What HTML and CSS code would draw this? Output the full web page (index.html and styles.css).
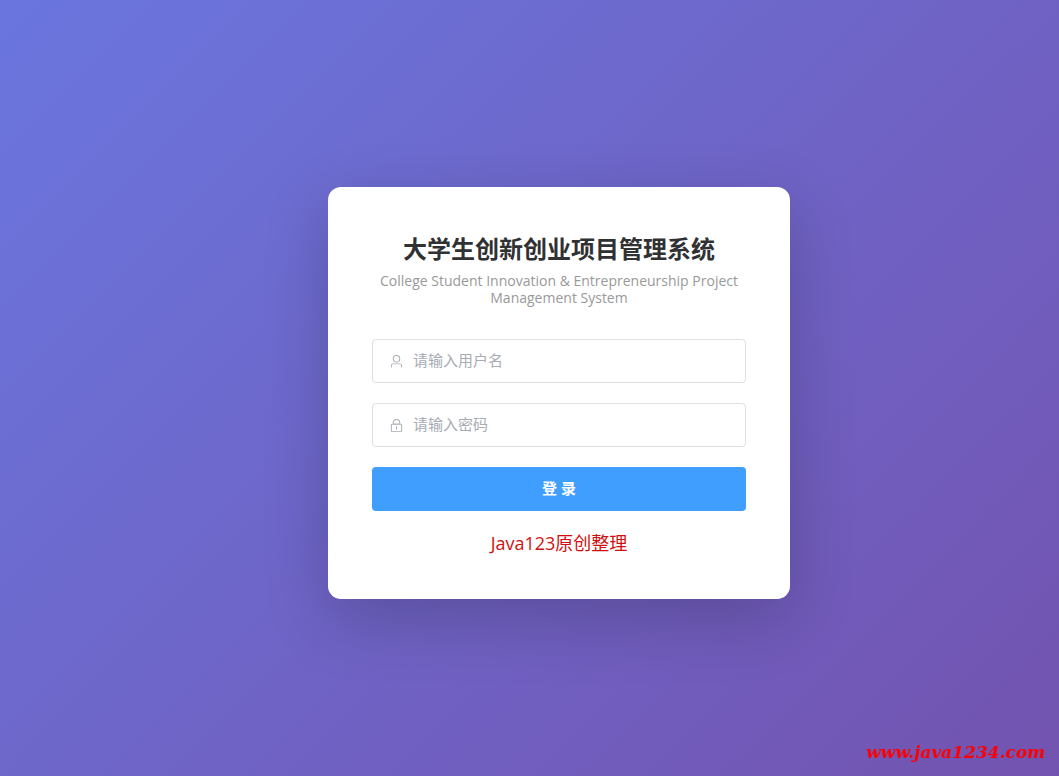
FILE: index.html
```html
<!DOCTYPE html>
<html lang="zh-CN">
<head>
    <meta charset="UTF-8">
    <meta name="viewport" content="width=device-width, initial-scale=1.0">
    <title>大学生创新创业项目管理系统</title>
    <link rel="stylesheet" href="styles.css">
</head>
<body>
    <main class="login-container">
        <div class="login-box">
            <div class="login-header">
                <h1>大学生创新创业项目管理系统</h1>
                <p>College Student Innovation &amp; Entrepreneurship Project Management System</p>
            </div>

            <form class="login-form">
                <label class="input-wrapper">
                    <svg class="input-icon" viewBox="0 0 1024 1024" aria-hidden="true">
                        <path d="M512 512a192 192 0 1 0 0-384 192 192 0 0 0 0 384m0 64a256 256 0 1 1 0-512 256 256 0 0 1 0 512m320 320v-96a96 96 0 0 0-96-96H288a96 96 0 0 0-96 96v96a32 32 0 1 1-64 0v-96a160 160 0 0 1 160-160h448a160 160 0 0 1 160 160v96a32 32 0 1 1-64 0"/>
                    </svg>
                    <input type="text" name="username" placeholder="请输入用户名" aria-label="用户名">
                </label>

                <label class="input-wrapper">
                    <svg class="input-icon" viewBox="0 0 1024 1024" aria-hidden="true">
                        <path d="M224 448a32 32 0 0 0-32 32v384a32 32 0 0 0 32 32h576a32 32 0 0 0 32-32V480a32 32 0 0 0-32-32zm0-64h576a96 96 0 0 1 96 96v384a96 96 0 0 1-96 96H224a96 96 0 0 1-96-96V480a96 96 0 0 1 96-96"/>
                        <path d="M512 544a32 32 0 0 1 32 32v192a32 32 0 1 1-64 0V576a32 32 0 0 1 32-32m192-160v-64a192 192 0 1 0-384 0v64zM512 64a256 256 0 0 1 256 256v128H256V320A256 256 0 0 1 512 64"/>
                    </svg>
                    <input type="password" name="password" placeholder="请输入密码" aria-label="密码">
                </label>

                <button type="submit" class="login-button">登 录</button>
            </form>

            <p class="login-footer">Java123原创整理</p>
        </div>
    </main>

    <div class="watermark">www.java1234.com</div>
</body>
</html>
```
FILE: styles.css
```css
* {
    box-sizing: border-box;
}

body {
    margin: 0;
    font-family: "Open Sans", "Noto Sans CJK SC", sans-serif;
    background: linear-gradient(135deg, #6a76de 0%, #7353b0 100%);
}

.login-container {
    display: flex;
    align-items: center;
    justify-content: center;
    min-height: 100vh;
    padding: 10px 0 0 59px;
}

.login-box {
    width: 462px;
    max-width: 100%;
    padding: 44px;
    background-color: #fff;
    border-radius: 13px;
    box-shadow: 0 20px 66px rgba(0, 0, 0, 0.2);
}

.login-header {
    margin-bottom: 33px;
    text-align: center;
}

.login-header h1 {
    margin: 0 0 5px;
    font-size: 24px;
    line-height: 36px;
    color: #303133;
}

.login-header p {
    margin: 0;
    font-size: 14px;
    line-height: 17px;
    color: #999;
}

.login-form {
    display: flex;
    flex-direction: column;
    gap: 20px;
}

.input-wrapper {
    display: flex;
    align-items: center;
    gap: 9px;
    height: 44px;
    padding: 0 16px;
    border: 1px solid #dcdfe6;
    border-radius: 4px;
}

.input-icon {
    width: 15px;
    height: 15px;
    fill: #a8abb2;
}

.input-wrapper input {
    flex: 1;
    min-width: 0;
    padding: 0 0 3px;
    border: none;
    outline: none;
    background: none;
    font-family: inherit;
    font-size: 15px;
    color: #606266;
}

.input-wrapper input::placeholder {
    color: #a8abb2;
}

.login-button {
    height: 44px;
    padding: 0 0 4px;
    border: none;
    border-radius: 4px;
    background-color: #409eff;
    font-family: inherit;
    font-size: 15px;
    font-weight: bold;
    color: #fff;
    cursor: pointer;
}

.login-footer {
    margin: 20px 0 0;
    font-size: 18px;
    line-height: 24px;
    text-align: center;
    color: #d01010;
}

/* Sits over the page in the bottom right corner */
.watermark {
    position: fixed;
    right: 14px;
    bottom: 12px;
    font-family: "DejaVu Serif", serif;
    font-size: 17px;
    font-style: italic;
    font-weight: bold;
    line-height: 24px;
    color: #f00;
}
```
